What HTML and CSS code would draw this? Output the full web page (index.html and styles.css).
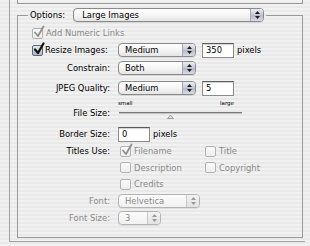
FILE: index.html
```html
<html>
<head>
    <link rel="stylesheet" href="styles.css">
</head>
<body>
<div class="panel">
    <div class="prev-box"></div>

    <fieldset class="group">
        <legend class="legend">
            <span>Options:</span>
            <span class="popup popup-options">
                <span class="popup-text">Large Images</span>
                <span class="popup-arrows"><svg width="5" height="8" viewBox="0 0 5 8"><path d="M2.5 0 L5 3 L0 3 Z M0 5 L5 5 L2.5 8 Z"/></svg></span>
            </span>
        </legend>

        <div class="rows">
            <div class="row row-addnum">
                <span class="check is-disabled"><svg class="tick" width="12" height="13" viewBox="0 0 12 13"><path d="M2 7.5 L5 11 L10.5 1.5"/></svg></span>
                <span class="muted">Add Numeric Links</span>
            </div>

            <div class="row row-resize">
                <span class="row-head">
                    <span class="check is-on"><svg class="tick" width="12" height="13" viewBox="0 0 12 13"><path d="M2 7.5 L5 11 L10.5 1.5"/></svg></span>
                    Resize Images:
                </span>
                <span class="popup popup-mid">
                    <span class="popup-text">Medium</span>
                    <span class="popup-arrows"><svg width="5" height="8" viewBox="0 0 5 8"><path d="M2.5 0 L5 3 L0 3 Z M0 5 L5 5 L2.5 8 Z"/></svg></span>
                </span>
                <span class="field-input input-num">350</span>
                <span class="unit">pixels</span>
            </div>

            <div class="row row-constrain">
                <span class="row-label">Constrain:</span>
                <span class="popup popup-mid">
                    <span class="popup-text">Both</span>
                    <span class="popup-arrows"><svg width="5" height="8" viewBox="0 0 5 8"><path d="M2.5 0 L5 3 L0 3 Z M0 5 L5 5 L2.5 8 Z"/></svg></span>
                </span>
            </div>

            <div class="row row-quality">
                <span class="row-label">JPEG Quality:</span>
                <span class="popup popup-mid">
                    <span class="popup-text">Medium</span>
                    <span class="popup-arrows"><svg width="5" height="8" viewBox="0 0 5 8"><path d="M2.5 0 L5 3 L0 3 Z M0 5 L5 5 L2.5 8 Z"/></svg></span>
                </span>
                <span class="field-input input-num">5</span>
            </div>

            <div class="row row-scale">
                <span class="row-label"></span>
                <span class="scale"><span>small</span><span>large</span></span>
            </div>

            <div class="row row-filesize">
                <span class="row-label">File Size:</span>
                <svg class="slider" width="124" height="12" viewBox="0 0 124 12">
                    <rect x="0" y="5" width="123" height="1" fill="#7a7a7a"/>
                    <rect x="0" y="6" width="123" height="1" fill="#c4c4c4"/>
                    <path d="M51.5 8 L54.5 11.5 L48.5 11.5 Z" fill="#e2e2e2" stroke="#8a8a8a" stroke-width="0.8"/>
                </svg>
            </div>

            <div class="row row-border">
                <span class="row-label">Border Size:</span>
                <span class="field-input">0</span>
                <span class="unit">pixels</span>
            </div>

            <div class="row row-titles">
                <span class="row-label">Titles Use:</span>
                <span class="titles">
                    <span class="opt"><span class="check is-disabled"><svg class="tick" width="12" height="13" viewBox="0 0 12 13"><path d="M2 7.5 L5 11 L10.5 1.5"/></svg></span>Filename</span>
                    <span class="opt"><span class="check is-disabled"></span>Title</span>
                    <span class="opt"><span class="check is-disabled"></span>Description</span>
                    <span class="opt"><span class="check is-disabled"></span>Copyright</span>
                    <span class="opt"><span class="check is-disabled"></span>Credits</span>
                </span>
            </div>

            <div class="row row-font">
                <span class="row-label muted">Font:</span>
                <span class="popup popup-font is-disabled">
                    <span class="popup-text">Helvetica</span>
                    <span class="popup-arrows"><svg width="5" height="8" viewBox="0 0 5 8"><path d="M2.5 0 L5 3 L0 3 Z M0 5 L5 5 L2.5 8 Z"/></svg></span>
                </span>
            </div>

            <div class="row row-fontsize">
                <span class="row-label muted">Font Size:</span>
                <span class="popup popup-size is-disabled">
                    <span class="popup-text">3</span>
                    <span class="popup-arrows"><svg width="5" height="8" viewBox="0 0 5 8"><path d="M2.5 0 L5 3 L0 3 Z M0 5 L5 5 L2.5 8 Z"/></svg></span>
                </span>
            </div>
        </div>
    </fieldset>
</div>
</body>
</html>
```

FILE: styles.css
```css
* {
    box-sizing: border-box;
}

body {
    margin: 0;
    width: 310px;
    height: 246px;
    overflow: hidden;
    background: repeating-linear-gradient(to bottom, #f1f1f1 0, #f1f1f1 2px, #e9e9e9 2px, #e9e9e9 4px);
    font-family: "DejaVu Sans", sans-serif;
    font-size: 8.4px;
    color: #000;
}

.panel {
    margin-left: 9px;
    width: 296px;
    height: 242px;
    border-left: 1px solid #a2a2a2;
    border-bottom: 1px solid #a2a2a2;
    padding-left: 7px;
    padding-right: 2px;
}

.prev-box {
    height: 4px;
    border: 1px solid #9a9a9a;
    border-top: none;
}

.group {
    margin: 4px 0 0;
    padding: 0;
    min-width: 0;
    border: 1px solid #9a9a9a;
}

.legend {
    display: flex;
    align-items: center;
    gap: 8px;
    height: 14px;
    margin-left: 10px;
    padding: 0 2px;
}

/* popup buttons */
.popup {
    display: inline-flex;
    align-items: stretch;
    height: 14px;
    border: 1px solid #8a8a8a;
    border-radius: 4px;
    background: linear-gradient(#ffffff, #f4f4f4 55%, #e4e4e4);
    box-shadow: 0 1px 0 rgba(0, 0, 0, 0.08);
    flex-shrink: 0;
}

.popup-text {
    flex: 1;
    display: flex;
    align-items: center;
    padding-left: 6px;
    white-space: nowrap;
}

.popup-arrows {
    width: 13px;
    display: flex;
    align-items: center;
    justify-content: center;
    border-left: 1px solid #a4a7b0;
    border-radius: 0 3px 3px 0;
    background: linear-gradient(#eceef3, #c3c7d1 50%, #b4b9c6 51%, #d9dce4);
}

.popup-arrows svg {
    fill: #1e1e1e;
}

.popup-options { width: 191px; padding-left: 2px; }
.popup-mid { width: 78px; }
.popup-font { width: 82px; }
.popup-size { width: 43px; }

.popup.is-disabled {
    border-color: #b4b4b4;
    color: #8a8a8a;
    background: linear-gradient(#fbfbfb, #f1f1f1);
}

.popup.is-disabled .popup-arrows {
    border-left-color: #c8c8c8;
    background: linear-gradient(#f4f4f4, #e2e2e2);
}

.popup.is-disabled .popup-arrows svg {
    fill: #9a9a9a;
}

/* rows */
.rows {
    padding: 0 0 12px 14px;
}

.row {
    display: flex;
    align-items: center;
}

.row-label {
    width: 78px;
    margin-right: 8px;
    text-align: right;
    white-space: nowrap;
    flex-shrink: 0;
}

.row-head {
    width: 78px;
    margin-right: 8px;
    display: flex;
    align-items: center;
    gap: 2px;
    white-space: nowrap;
    flex-shrink: 0;
}

.row-addnum { height: 14px; margin-top: 4px; gap: 3px; }
.row-resize { height: 16px; margin-top: 2px; }
.row-constrain { height: 14px; margin-top: 3px; }
.row-quality { height: 16px; margin-top: 5px; }
.row-scale { height: 8px; margin-top: 3px; }
.row-filesize { height: 12px; }
.row-border { height: 16px; margin-top: 7px; }
.row-titles { margin-top: 3px; align-items: flex-start; }
.row-font { height: 14px; margin-top: 4px; }
.row-fontsize { height: 14px; margin-top: 3px; }

.row-titles .row-label {
    line-height: 12px;
}

.muted {
    color: #8a8a8a;
}

/* checkboxes */
.check {
    position: relative;
    width: 11px;
    height: 11px;
    flex-shrink: 0;
    border: 1px solid #8d8d8d;
    border-radius: 2px;
    background: linear-gradient(#ffffff, #e6e6e6);
}

.check.is-disabled {
    border-color: #b2b2b2;
    background: linear-gradient(#fbfbfb, #ececec);
}

.check.is-on {
    border-color: #5f6672;
    background: linear-gradient(#e4e8ef, #aeb7c6);
}

.tick {
    position: absolute;
    left: 0;
    top: -4px;
    fill: none;
    stroke: #111;
    stroke-width: 2.2;
    stroke-linecap: round;
    stroke-linejoin: round;
}

.is-disabled .tick {
    stroke: #8f8f8f;
    stroke-width: 1.8;
}

/* text fields */
.field-input {
    width: 32px;
    height: 15px;
    flex-shrink: 0;
    display: flex;
    align-items: center;
    padding-left: 3px;
    background: #fff;
    border: 1px solid #8c8c8c;
    border-top-color: #5c5c5c;
    box-shadow: inset 0 1px 1px rgba(0, 0, 0, 0.18);
}

.input-num {
    margin-left: 6px;
}

.unit {
    margin-left: 3px;
}

/* slider */
.scale {
    width: 116px;
    display: flex;
    justify-content: space-between;
    font-size: 5.5px;
}

.slider {
    margin-left: 1px;
    display: block;
}

/* titles use */
.titles {
    display: grid;
    grid-template-columns: 85px auto;
    grid-auto-rows: 12px;
    row-gap: 4.5px;
    margin-left: 2px;
    color: #8a8a8a;
}

.opt {
    display: flex;
    align-items: center;
    gap: 3px;
    white-space: nowrap;
}
```
